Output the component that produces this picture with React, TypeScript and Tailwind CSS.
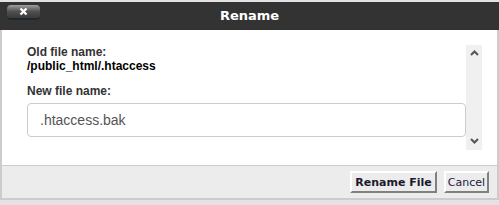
import React from "react";

function Chevron({ up }: { up?: boolean }) {
  return (
    <svg width="9" height="6" viewBox="0 0 9 6" className="block">
      <path
        d={up ? "M1 5 L4.5 1.5 L8 5" : "M1 1 L4.5 4.5 L8 1"}
        fill="none"
        stroke="#555"
        strokeWidth="2"
      />
    </svg>
  );
}

export default function App() {
  return (
    <div className="w-[499px] h-[205px] bg-[#e3e3e3] pt-[2px] overflow-hidden">
      <div className="w-[499px]">
        {/* Header */}
        <div className="h-[28px] bg-[#333333] grid grid-cols-[1fr_auto_1fr] items-start">
          <div className="pt-[3px] pl-[7px]">
            <div className="w-[33px] h-[15px] rounded-[4px] bg-gradient-to-b from-[#a0a0a0] via-[#505050] to-[#3a3a3a] border-b-2 border-[#1c2a30] flex items-center justify-center">
              <svg width="9" height="9" viewBox="0 0 9 9">
                <path d="M1.5 1.5 L7.5 7.5 M7.5 1.5 L1.5 7.5" stroke="#fff" strokeWidth="2.4" />
              </svg>
            </div>
          </div>
          <div className="h-[28px] flex items-center text-white font-bold text-[13px] font-['DejaVu_Sans',sans-serif]">
            Rename
          </div>
          <div />
        </div>
        {/* Body */}
        <div className="h-[135px] bg-white border-l-2 border-r-2 border-[#cccccc] pt-[15px] pb-[15px] pr-[15px] flex">
          <div className="flex-1 pl-[25px] font-['Liberation_Sans',Arial,sans-serif] text-[12px] leading-[14px]">
            <div className="font-bold text-[#333333]">Old file name:</div>
            <div className="font-bold text-black">/public_html/.htaccess</div>
            <div className="font-bold text-[#333333] mt-[11px]">New file name:</div>
            <div className="mt-[5px] h-[34px] border border-[#cccccc] rounded-[4px] flex items-center pl-[12px] text-[14px] text-[#555555]">
              .htaccess.bak
            </div>
          </div>
          <div className="w-[16px] bg-[#f0f0f0] flex flex-col items-center justify-between pt-[5px] pb-[6px]">
            <Chevron up />
            <Chevron />
          </div>
        </div>
        {/* Footer */}
        <div className="h-[35px] bg-[#ececec] border-l-2 border-r-2 border-t border-b-2 border-[#cccccc] flex items-center justify-end gap-[7px] pr-[8px] font-['DejaVu_Sans',Verdana,sans-serif] text-[11px]">
          <button className="h-[22px] px-[3px] bg-[#ececec] border-2 border-t-[#ffffff] border-l-[#ffffff] border-r-[#808080] border-b-[#808080] font-bold text-[#1a1a2e] leading-none">
            Rename File
          </button>
          <button className="h-[22px] px-[2px] bg-[#ececec] border-2 border-t-[#ffffff] border-l-[#ffffff] border-r-[#808080] border-b-[#808080] text-[#1a1a3e] leading-none">
            Cancel
          </button>
        </div>
      </div>
    </div>
  );
}
